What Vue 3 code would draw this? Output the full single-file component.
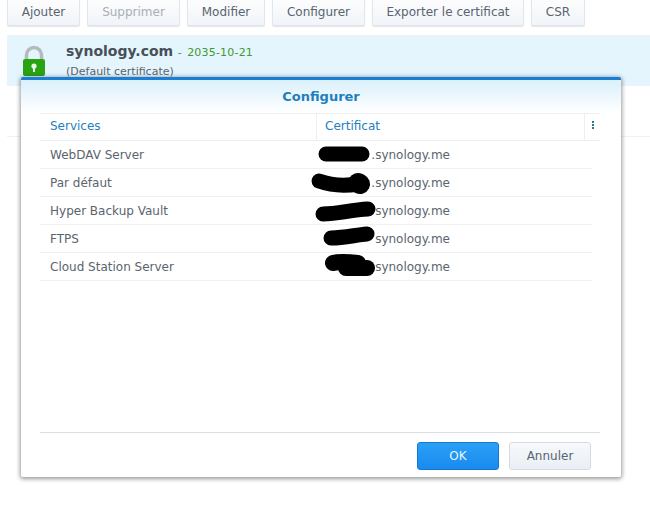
<script setup>
const rows = [
  { name: 'WebDAV Server', host: '.synology.me' },
  { name: 'Par défaut', host: '.synology.me' },
  { name: 'Hyper Backup Vault', host: 'synology.me' },
  { name: 'FTPS', host: 'synology.me' },
  { name: 'Cloud Station Server', host: 'synology.me' },
]
const scribbles = [
  { d: 'M326 154 H362', w: 15 },
  { d: 'M319 181 C330 185 345 186 358 184', w: 15 },
  { d: 'M358 183 L360 184', w: 20 },
  { d: 'M323 214 C338 214 350 210 368 209', w: 15 },
  { d: 'M331 238 C345 238 355 235 367 234', w: 15 },
  { d: 'M333 263 C340 261 350 262 358 263', w: 16 },
  { d: 'M346 268 H367', w: 16 },
]
const buttons = [
  { label: 'Ajouter', w: 73 },
  { label: 'Supprimer', w: 93, off: true },
  { label: 'Modifier', w: 78 },
  { label: 'Configurer', w: 93 },
  { label: 'Exporter le certificat', w: 152 },
  { label: 'CSR', w: 54 },
]
</script>

<template>
  <div class="page">
    <div class="toolbar">
      <button
        v-for="b in buttons"
        :key="b.label"
        class="tool"
        :class="{ off: b.off }"
        :style="{ width: b.w + 'px' }"
      >{{ b.label }}</button>
    </div>

    <div class="cert">
      <svg class="lock" width="26" height="32" viewBox="0 0 26 32">
        <path d="M5.5 16 V10 a7.5 7.5 0 0 1 15 0 V16" fill="none" stroke="#b4bac0" stroke-width="3.5" />
        <rect x="2" y="14" width="22" height="17" rx="2" fill="#2aa313" />
        <circle cx="13" cy="21" r="2.6" fill="#e8f8e4" />
        <rect x="12" y="22" width="2" height="5" fill="#e8f8e4" />
      </svg>
      <div class="cert-text">
        <div class="cert-title"><b>synology.com</b><span class="dash"> - </span><span class="date">2035-10-21</span></div>
        <div class="cert-sub">(Default certificate)</div>
      </div>
    </div>
    <div class="ghost-row"></div>

    <div class="dialog">
      <div class="head">Configurer</div>
      <div class="body">
        <div class="thead">
          <div class="th c1">Services</div>
          <div class="th c2">Certificat</div>
          <div class="th c3"><span class="dots"><i></i><i></i><i></i></span></div>
        </div>
        <div class="tbody">
          <div v-for="r in rows" :key="r.name" class="tr">
            <div class="c1 td">{{ r.name }}</div>
            <div class="c2 td host">{{ r.host }}</div>
          </div>
        </div>
      </div>
      <div class="foot">
        <button class="ok">OK</button>
        <button class="cancel">Annuler</button>
      </div>
    </div>

    <svg class="scribbles" width="650" height="514" viewBox="0 0 650 514">
      <path
        v-for="s in scribbles"
        :key="s.d"
        :d="s.d"
        fill="none"
        stroke="#000"
        stroke-linecap="round"
        stroke-linejoin="round"
        :stroke-width="s.w"
      />
    </svg>
  </div>
</template>

<style>
html, body { margin: 0; background: #fff; }
</style>

<style scoped>
.page {
  position: relative;
  width: 650px;
  height: 514px;
  overflow: hidden;
  background: #fff;
  font-family: "DejaVu Sans", sans-serif;
  font-size: 12px;
  color: #5a646e;
}
.toolbar {
  display: flex;
  gap: 7px;
  height: 26px;
  padding-left: 7px;
  margin-top: -2px;
  margin-bottom: 11px;
}
.tool {
  height: 28px;
  padding: 0;
  border: 1px solid #e2e6ea;
  border-radius: 2px;
  background: linear-gradient(#fdfdfe, #f0f4f8);
  box-shadow: 0 1px 1px rgba(0, 0, 0, .1);
  font: inherit;
  color: #5a646e;
}
.tool.off { color: #a7afb7; }
.cert {
  display: flex;
  height: 51px;
  margin-left: 7px;
  background: #e5f5fd;
  border-top: 1px solid #eef3f6;
  box-sizing: border-box;
}
.lock { margin: 9px 0 0 14px; flex: none; }
.cert-text { margin-left: 19px; padding-top: 6px; }
.cert-title { line-height: 18px; white-space: pre; }
.cert-title b { font-size: 14px; color: #474f58; margin-right: 1px; }
.dash { font-size: 11px; color: #5a8a5a; }
.date { font-size: 11px; letter-spacing: .2px; margin-left: 2px; color: #3d9a2e; }
.cert-sub { font-size: 11px; line-height: 16px; margin-top: 2px; color: #5a646e; }
.ghost-row {
  height: 50px;
  margin-left: 7px;
  border-bottom: 1px solid #f0f2f4;
}
.dialog {
  position: absolute;
  left: 21px;
  top: 77px;
  width: 600px;
  height: 400px;
  box-sizing: border-box;
  display: flex;
  flex-direction: column;
  background: #fff;
  border-top: 3px solid #1a7fd2;
  border-radius: 2px;
  box-shadow: 0 1px 4px 1px rgba(0, 0, 0, .4);
}
.head {
  height: 33px;
  flex: none;
  text-align: center;
  line-height: 33px;
  font-size: 13px;
  font-weight: 700;
  color: #1f7fbd;
  background: linear-gradient(#daf0fb, #fff);
}
.body { flex: 1; padding: 0 0 0 19px; }
.thead {
  display: flex;
  width: 560px;
  height: 28px;
  box-sizing: border-box;
  border-top: 1px solid #eceef0;
  border-bottom: 1px solid #eceef0;
  color: #1f7fbd;
  line-height: 25px;
}
.th.c2 { border-left: 1px solid #eceef0; }
.th.c3 { border-left: 1px solid #eceef0; width: 15px; flex: none; position: relative; }
.dots {
  position: absolute;
  left: 7px;
  top: 7px;
  display: flex;
  flex-direction: column;
  gap: 1px;
}
.dots i { width: 2px; height: 2px; background: #2b7a8a; display: block; }
.tbody { width: 552px; }
.c1 { width: 276px; flex: none; padding-left: 10px; box-sizing: border-box; }
.c2 { width: 268px; flex: none; padding-left: 8px; box-sizing: border-box; }
.tr {
  display: flex;
  height: 28px;
  box-sizing: border-box;
  border-bottom: 1px solid #f0f1f3;
  line-height: 28px;
}
.host {
  padding-left: 0;
  padding-right: 134px;
  text-align: right;
}
.foot {
  flex: none;
  height: 45px;
  margin: 0 21px 0 19px;
  border-top: 1px solid #dcdfe2;
  display: flex;
  justify-content: flex-end;
  gap: 10px;
  padding: 9px 9px 0 0;
  box-sizing: border-box;
}
.foot button {
  height: 28px;
  padding: 0;
  font: inherit;
  border-radius: 3px;
}
.ok {
  width: 82px;
  border: 1px solid #1578d0;
  background: linear-gradient(#2aa0f5, #1a8af0);
  color: #e8f6ff;
  font-weight: 700;
}
.cancel {
  width: 82px;
  border: 1px solid #d5dadf;
  background: linear-gradient(#f7f9fb, #e9eff5);
  color: #5a646e;
}
.scribbles { position: absolute; left: 0; top: 0; pointer-events: none; }
</style>
